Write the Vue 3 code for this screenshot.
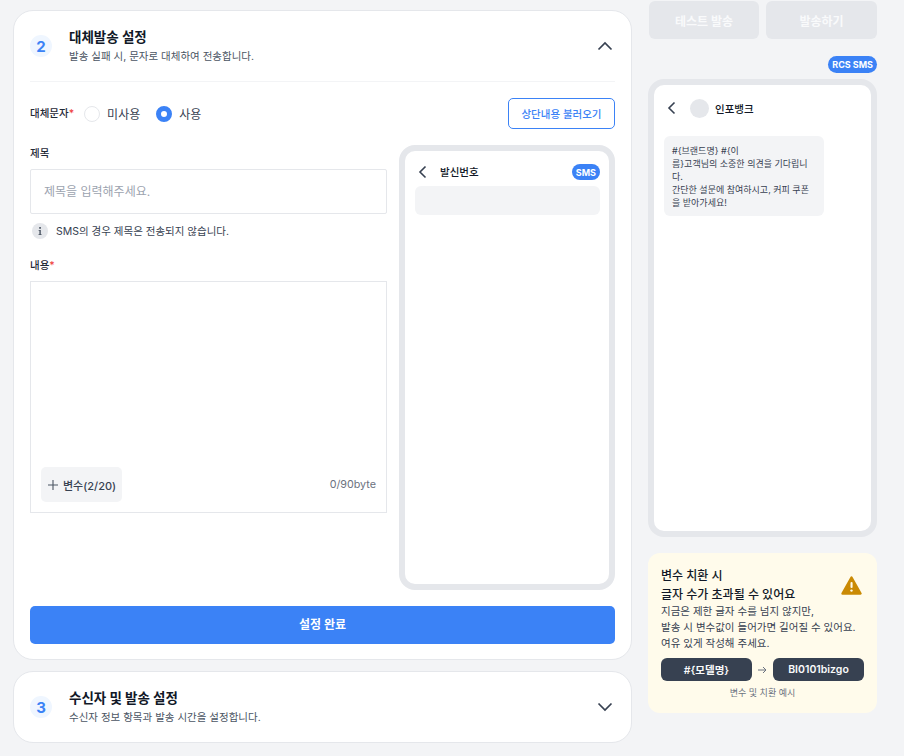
<script setup>
const steps = {
  two: { no: 2, title: '대체발송 설정', desc: '발송 실패 시, 문자로 대체하여 전송합니다.' },
  three: { no: 3, title: '수신자 및 발송 설정', desc: '수신자 정보 항목과 발송 시간을 설정합니다.' },
}
</script>

<template>
  <div class="page">
    <div class="left">
      <section class="card">
        <div class="card-head">
          <span class="step-no">{{ steps.two.no }}</span>
          <div class="head-text">
            <h2>{{ steps.two.title }}</h2>
            <p>{{ steps.two.desc }}</p>
          </div>
          <svg class="chev" width="16" height="10" viewBox="0 0 16 10" fill="none">
            <path d="M1.5 8.5 8 2l6.5 6.5" stroke="#374151" stroke-width="1.7" />
          </svg>
        </div>

        <div class="radio-row">
          <span class="label">대체문자<em>*</em></span>
          <label class="radio"><i class="dot"></i>미사용</label>
          <label class="radio"><i class="dot on"></i>사용</label>
          <button class="load-btn">상단내용 불러오기</button>
        </div>

        <div class="form-grid">
          <div class="form-col">
            <div class="label title-label">제목</div>
            <div class="input">제목을 입력해주세요.</div>
            <div class="note">
              <span class="note-icon">
                <svg width="16" height="16" viewBox="0 0 16 16">
                  <circle cx="8" cy="8" r="8" fill="#e5e7eb" />
                  <path d="M6.6 7h2.2v4.2h.8V12H6.5v-.8h.9V7.8h-.8Z" fill="#4b5563" />
                  <rect x="7.2" y="4" width="1.7" height="1.8" fill="#4b5563" />
                </svg>
              </span>
              SMS의 경우 제목은 전송되지 않습니다.
            </div>
            <div class="label body-label">내용<em>*</em></div>
            <div class="textarea">
              <button class="var-btn">
                <svg width="10" height="10" viewBox="0 0 10 10" fill="none">
                  <path d="M5 0v10M0 5h10" stroke="#4b5563" stroke-width="1.1" />
                </svg>
                변수(2/20)
              </button>
              <span class="count">0/90byte</span>
            </div>
          </div>

          <div class="phone sms-phone">
            <div class="screen">
              <div class="sms-head">
                <svg class="back" width="9" height="14" viewBox="0 0 9 14" fill="none">
                  <path d="M7.5 1.5 2 7l5.5 5.5" stroke="#374151" stroke-width="1.6" />
                </svg>
                <span class="sender">발신번호</span>
                <span class="badge">SMS</span>
              </div>
              <div class="subject-box"></div>
            </div>
          </div>
        </div>

        <button class="done-btn">설정 완료</button>
      </section>

      <section class="card collapsed">
        <div class="collapsed-head">
          <span class="step-no">{{ steps.three.no }}</span>
          <div class="head-text">
            <h2>{{ steps.three.title }}</h2>
            <p>{{ steps.three.desc }}</p>
          </div>
          <svg class="chev" width="16" height="10" viewBox="0 0 16 10" fill="none">
            <path d="M1.5 1.5 8 8l6.5-6.5" stroke="#374151" stroke-width="1.7" />
          </svg>
        </div>
      </section>
    </div>

    <aside class="right">
      <div class="actions">
        <button>테스트 발송</button>
        <button>발송하기</button>
      </div>
      <div class="badge-row"><span class="badge">RCS SMS</span></div>
      <div class="phone rcs-phone">
        <div class="screen">
          <div class="rcs-head">
            <svg width="9" height="14" viewBox="0 0 9 14" fill="none">
              <path d="M7.5 1.5 2 7l5.5 5.5" stroke="#374151" stroke-width="1.6" />
            </svg>
            <span class="avatar"></span>
            <span class="sender">인포뱅크</span>
          </div>
          <div class="bubble">#{브랜드명} #{이<br />름}고객님의 소중한 의견을 기다립니<br />다.<br />간단한 설문에 참여하시고, 커피 쿠폰<br />을 받아가세요!</div>
        </div>
      </div>

      <div class="warn">
        <div class="warn-top">
          <h3>변수 치환 시<br />글자 수가 초과될 수 있어요</h3>
          <svg width="21" height="19" viewBox="0 0 21 19">
            <path d="M10.5 1.5 19.5 17.5H1.5Z" fill="#ca8a04" stroke="#ca8a04" stroke-width="2.4" stroke-linejoin="round" />
            <rect x="9.5" y="6" width="2.1" height="6" rx="1" fill="#fffbeb" />
            <circle cx="10.5" cy="14.6" r="1.2" fill="#fffbeb" />
          </svg>
        </div>
        <p>지금은 제한 글자 수를 넘지 않지만,<br />발송 시 변수값이 들어가면 길어질 수 있어요.<br />여유 있게 작성해 주세요.</p>
        <div class="swap">
          <span class="chip">#{모델명}</span>
          <svg width="9" height="8" viewBox="0 0 9 8" fill="none">
            <path d="M0 4h8M5 1l3 3-3 3" stroke="#6b7280" stroke-width="1" />
          </svg>
          <span class="chip">BI0101bizgo</span>
        </div>
        <div class="caption">변수 및 치환 예시</div>
      </div>
    </aside>
  </div>
</template>

<style scoped>
.page {
  display: flex;
  align-items: flex-start;
  gap: 16px;
  width: 904px;
  height: 756px;
  overflow: hidden;
  box-sizing: border-box;
  padding-left: 13px;
  background: #f3f4f6;
  color: #111827;
  font-family: Inter, "Noto Sans CJK KR", sans-serif;
}
.left {
  display: flex;
  flex-direction: column;
  gap: 11px;
  width: 619px;
  padding-top: 10px;
}
.card {
  box-sizing: border-box;
  height: 650px;
  padding: 0 16px;
  background: #fff;
  border: 1px solid #e5e7eb;
  border-radius: 20px;
}
.card.collapsed {
  height: 72px;
}
.card-head {
  display: flex;
  align-items: center;
  height: 70px;
  border-bottom: 1px solid #f3f4f6;
}
.collapsed-head {
  display: flex;
  align-items: center;
  height: 70px;
}
.step-no {
  display: flex;
  align-items: center;
  justify-content: center;
  width: 22px;
  height: 22px;
  border-radius: 50%;
  background: #eff6ff;
  color: #3b82f6;
  font-size: 15px;
  font-weight: 700;
}
.head-text {
  flex: 1;
  margin-left: 17px;
  padding-top: 2px;
}
.head-text h2 {
  margin: 0;
  font-size: 13.5px;
  line-height: 20px;
  font-weight: 700;
}
.head-text p {
  margin: 0;
  font-size: 10.5px;
  line-height: 20px;
  color: #4b5563;
}
.chev {
  margin-right: 2px;
}
.radio-row {
  display: flex;
  align-items: center;
  height: 31px;
  margin-top: 16px;
}
.label {
  font-size: 10.5px;
  line-height: 16px;
  font-weight: 500;
  color: #1f2937;
}
.label em {
  font-style: normal;
  color: #ef4444;
}
.radio {
  display: flex;
  align-items: center;
  gap: 7px;
  margin-left: 10px;
  margin-right: 6px;
  font-size: 12px;
  color: #374151;
}
.dot {
  box-sizing: border-box;
  width: 16px;
  height: 16px;
  border: 1px solid #e5e7eb;
  border-radius: 50%;
  background: #fff;
}
.dot.on {
  border: 5px solid #3b82f6;
}
.load-btn {
  box-sizing: border-box;
  width: 107px;
  height: 31px;
  margin-left: auto;
  background: #fff;
  border: 1px solid #3b82f6;
  border-radius: 5px;
  color: #3b82f6;
  font-family: inherit;
  font-size: 10.5px;
  font-weight: 500;
}
.form-grid {
  display: grid;
  grid-template-columns: 357px 216px;
  gap: 12px;
  margin-top: 16px;
}
.title-label {
  padding-top: 1px;
}
.input {
  box-sizing: border-box;
  height: 45px;
  margin-top: 7px;
  padding: 0 13px;
  border: 1px solid #e5e7eb;
  border-radius: 2px;
  color: #9ca3af;
  font-size: 12px;
  line-height: 43px;
}
.note {
  display: flex;
  align-items: center;
  gap: 8px;
  height: 17px;
  margin-top: 8px;
  font-size: 10.5px;
  color: #374151;
}
.note-icon {
  display: flex;
  margin-left: 2px;
}
.body-label {
  margin-top: 19px;
}
.textarea {
  display: flex;
  align-items: flex-end;
  justify-content: space-between;
  box-sizing: border-box;
  height: 232px;
  margin-top: 7px;
  padding: 0 10px 10px;
  border: 1px solid #e5e7eb;
}
.var-btn {
  display: flex;
  align-items: center;
  gap: 5px;
  width: 81px;
  height: 35px;
  padding: 0 0 0 7px;
  background: #f3f4f6;
  border: 0;
  border-radius: 5px;
  color: #374151;
  font-family: inherit;
  font-size: 11px;
  font-weight: 500;
}
.count {
  height: 35px;
  color: #6b7280;
  font-size: 10.75px;
  line-height: 35px;
}
.phone {
  box-sizing: border-box;
  background: #fff;
  border: 6px solid #e5e7eb;
  border-radius: 16px;
}
.sms-phone {
  height: 445px;
}
.screen {
  height: 100%;
}
.sms-head {
  display: flex;
  align-items: center;
  height: 28px;
  margin-top: 7px;
  padding: 0 9px 0 13px;
}
.sender {
  font-size: 10.5px;
  font-weight: 500;
  color: #111827;
}
.sms-head .sender {
  margin-left: 13px;
  margin-bottom: 2px;
}
.sms-head .back {
  margin-bottom: 1px;
}
.sms-head .badge {
  margin-left: auto;
}
.badge {
  display: inline-flex;
  align-items: center;
  height: 16px;
  padding: 0 4px;
  background: #3b82f6;
  border-radius: 9px;
  color: #fff;
  font-size: 9px;
  font-weight: 700;
}
.subject-box {
  height: 29px;
  margin: 0 9px 0 10px;
  background: #f3f4f6;
  border-radius: 6px;
}
.done-btn {
  display: block;
  width: 100%;
  height: 38px;
  margin-top: 16px;
  background: #3b82f6;
  border: 0;
  border-radius: 5px;
  color: #fff;
  font-family: inherit;
  font-size: 12px;
  font-weight: 700;
  line-height: 34px;
}
.right {
  display: flex;
  flex-direction: column;
  width: 229px;
  padding-top: 1px;
}
.actions {
  display: flex;
  gap: 7px;
  padding-left: 1px;
}
.actions button {
  flex: 1 1 0;
  height: 38px;
  background: #e5e7eb;
  border: 0;
  border-radius: 6px;
  color: #f9fafb;
  font-family: inherit;
  font-size: 12px;
  font-weight: 700;
}
.actions button:first-child {
  flex: 0 0 110px;
}
.badge-row {
  display: flex;
  justify-content: flex-end;
  margin-top: 17px;
}
.badge-row .badge {
  height: 17px;
}
.rcs-phone {
  height: 458px;
  margin-top: 6px;
}
.rcs-head {
  display: flex;
  align-items: center;
  height: 20px;
  margin-top: 13px;
  padding-left: 13px;
}
.avatar {
  width: 19px;
  height: 19px;
  margin: 0 6px 0 14px;
  border-radius: 50%;
  background: #e5e7eb;
}
.bubble {
  box-sizing: border-box;
  width: 160px;
  height: 80px;
  margin: 18px 0 0 10px;
  padding: 7.5px 8px;
  background: #f3f4f6;
  border-radius: 6px;
  color: #374151;
  font-size: 9px;
  line-height: 13px;
  white-space: nowrap;
}
.warn {
  box-sizing: border-box;
  height: 160px;
  margin-top: 16px;
  padding: 13px 13px 0;
  background: #fffbeb;
  border-radius: 12px;
}
.warn-top {
  display: flex;
  align-items: center;
  justify-content: space-between;
  padding-right: 2px;
}
.warn-top h3 {
  margin: 0;
  font-size: 12px;
  line-height: 19px;
  font-weight: 500;
  color: #111827;
}
.warn p {
  margin: 0;
  font-size: 10.5px;
  line-height: 16px;
  color: #374151;
}
.swap {
  display: flex;
  align-items: center;
  justify-content: space-between;
  margin-top: 6px;
}
.chip {
  display: flex;
  align-items: center;
  justify-content: center;
  width: 91px;
  height: 23px;
  background: #374151;
  border-radius: 6px;
  color: #f9fafb;
  font-size: 10.5px;
  font-weight: 600;
}
.caption {
  margin-top: 5px;
  text-align: center;
  font-size: 9px;
  color: #6b7280;
}
</style>

<style>
html, body {
  background: #f3f4f6;
}
</style>
